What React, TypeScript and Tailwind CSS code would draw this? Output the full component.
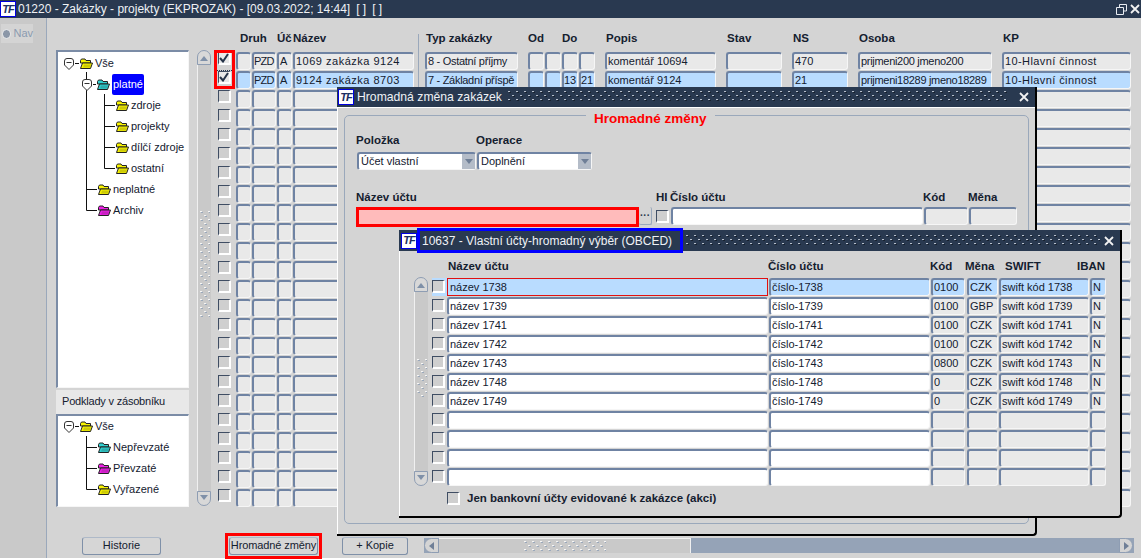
import React from 'react';

const FIELD_TEXT = 'h-[18px] px-[1px] text-[11px] leading-[14px] whitespace-nowrap overflow-hidden text-[#14202f]';
const FIELD_BORDER =
  'border-t-2 border-l-2 border-t-[#6f83a3] border-l-[#6f83a3] border-r border-b border-r-[#f6f6f6] border-b-[#f6f6f6] rounded-[3px]';
const FIELD = `${FIELD_BORDER} ${FIELD_TEXT}`;

const COLS = [
  'ml-0 w-[15px]',
  'ml-[1px] w-[24px] px-0! tracking-[-0.8px]',
  'ml-[1px] w-[15px]',
  'ml-[1px] w-[121px] tracking-[0.5px]',
  'ml-[11px] w-[93px] tracking-[-0.3px]',
  'ml-[10px] w-[16px] px-0!',
  'ml-[1px] w-[16px] px-0!',
  'ml-[1px] w-[16px] px-0!',
  'ml-[1px] w-[16px] px-0!',
  'ml-[10px] w-[111px]',
  'ml-[10px] w-[56px]',
  'ml-[10px] w-[56px]',
  'ml-[10px] w-[134px] tracking-[-0.3px]',
  'ml-[10px] w-[129px] tracking-[0.4px]',
];

const HEAD = ['Druh', '', 'Úč', 'Název', 'Typ zakázky', 'Od', '', 'Do', '', 'Popis', 'Stav', 'NS', 'Osoba', 'KP'];

const ROWS: string[][] = [
  ['', 'PZD', 'A', '1069 zakázka 9124', '8 - Ostatní příjmy', '', '', '', '', 'komentář 10694', '', '470', 'prijmeni200 jmeno200', '10-Hlavní činnost'],
  ['', 'PZD', 'A', '9124 zakázka 8703', '7 - Základní příspě', '', '', '13', '21', 'komentář 9124', '', '21', 'prijmeni18289 jmeno18289', '10-Hlavní činnost'],
];

const ACCOUNT_COLS = ['w-[321px]', 'ml-[1px] w-[161px]', 'ml-[1px] w-[34px]', 'ml-[2px] w-[31px]', 'ml-[1px] w-[90px]', 'ml-[1px] w-[16px]'];

const ACCOUNTS: string[][] = [
  ['název 1738', 'číslo-1738', '0100', 'CZK', 'swift kód 1738', 'N'],
  ['název 1739', 'číslo-1739', '0100', 'GBP', 'swift kód 1739', 'N'],
  ['název 1741', 'číslo-1741', '0100', 'CZK', 'swift kód 1741', 'N'],
  ['název 1742', 'číslo-1742', '0100', 'CZK', 'swift kód 1742', 'N'],
  ['název 1743', 'číslo-1743', '0800', 'CZK', 'swift kód 1743', 'N'],
  ['název 1748', 'číslo-1748', '0', 'CZK', 'swift kód 1748', 'N'],
  ['název 1749', 'číslo-1749', '0', 'CZK', 'swift kód 1749', 'N'],
];

const Logo = () => (
  <div className="w-[16px] h-[16px] shrink-0 bg-white border border-[#0000e0] flex items-center justify-center overflow-hidden">
    <span className="text-[11px] leading-none font-bold italic text-[#1c2f63] tracking-[-1px]">TF</span>
  </div>
);

const Dots = ({ id, w, h, fill = '#b8c0cc', shade, step = 8 }: { id: string; w: number; h: number; fill?: string; shade?: string; step?: number }) => (
  <svg width={w} height={h} className="shrink-0">
    <defs>
      <pattern id={id} width={step} height={step} patternUnits="userSpaceOnUse">
        {shade && <rect x="1" y="1" width="2" height="1" fill={shade} />}
        {shade && <rect x={step / 2 + 1} y={step / 2 + 1} width="2" height="1" fill={shade} />}
        <rect x="0" y="0" width="2" height="1" fill={fill} />
        <rect x={step / 2} y={step / 2} width="2" height="1" fill={fill} />
      </pattern>
    </defs>
    <rect width={w} height={h} fill={`url(#${id})`} />
  </svg>
);

const CloseIcon = () => (
  <svg width="10" height="10" viewBox="0 0 10 10" className="shrink-0">
    <path d="M1 1 L9 9 M9 1 L1 9" stroke="#f2f2f2" strokeWidth="1.8" />
  </svg>
);

const Folder = ({ color = '#f8f400' }: { color?: string }) => (
  <svg width="14" height="12" viewBox="0 0 14 12" className="shrink-0">
    <path d="M1.5 2.5 L2.5 1 H6 L7 2.5 H11.5 V5 H1.5 Z" fill={color} stroke="#222" strokeWidth="1" />
    <path d="M1.5 10.5 L3.5 5 H13.5 L11.5 10.5 Z" fill={color} stroke="#222" strokeWidth="1" />
    <path d="M4 9.5 L5 6.5 H12 L11 9.5 Z" fill="#222" fillOpacity="0.2" />
  </svg>
);

const TreeRow = ({ indent, color, label, active }: { indent: string; color?: string; label: string; active?: boolean }) => (
  <div className={`h-[21px] flex items-center gap-[2px] ${indent}`}>
    <Folder color={color} />
    {active ? (
      <span className="bg-[#0000ff] text-white rounded-[2px] h-[21px] leading-[21px] px-[1px] text-[11px]">{label}</span>
    ) : (
      <span className="text-[11px] text-[#14202f] whitespace-nowrap">{label}</span>
    )}
  </div>
);

const Shield = ({ x, y }: { x: number; y: number }) => (
  <g transform={`translate(${x} ${y})`}>
    <path d="M0.5 3 Q0.5 0.5 3 0.5 H7 Q9.5 0.5 9.5 3 V7 L5 11.5 L0.5 7 Z" fill="#fff" stroke="#333" />
    <path d="M2.5 4.5 H7.5" stroke="#333" />
  </g>
);

const TREE_PANEL =
  'relative bg-white border-t-2 border-l-2 border-t-[#7b8ca6] border-l-[#7b8ca6] border-r border-b border-r-[#f6f6f6] border-b-[#f6f6f6]';

const Checkbox = ({ checked }: { checked?: boolean }) => (
  <div
    className={`w-[13px] h-[13px] shrink-0 border-t border-l border-t-[#3f4d63] border-l-[#3f4d63] border-r-2 border-b-2 border-r-white border-b-white flex items-center justify-center ${
      checked ? 'bg-[#e9e9e9]' : 'bg-[#cfcfcf]'
    }`}
  >
    {checked && (
      <svg width="10" height="10" viewBox="0 0 10 10">
        <path d="M1 5 L4 8.5 L9 1" fill="none" stroke="#26344a" strokeWidth="2" />
      </svg>
    )}
  </div>
);

const VScroll = ({ className, trackClass, dots, id }: { className: string; trackClass: string; dots: number; id: string }) => (
  <div className={`flex flex-col w-[14px] shrink-0 ${className}`}>
    <div className="h-[15px] shrink-0 rounded-t-full border border-[#8e9db3] bg-[#d8d8d8] flex items-center justify-center pt-[2px]">
      <svg width="8" height="5"><path d="M4 0 L8 5 H0 Z" fill="#7f90a8" /></svg>
    </div>
    <div className={`flex-1 bg-[#c9c9c9] border-l border-l-[#f0f0f0] flex items-center justify-center ${trackClass}`}>
      <Dots id={id} w={10} h={dots} fill="#f6f6f6" shade="#9aa8bb" />
    </div>
    <div className="h-[15px] shrink-0 rounded-b-full border border-[#8e9db3] bg-[#d8d8d8] flex items-center justify-center pb-[2px]">
      <svg width="8" height="5"><path d="M0 0 H8 L4 5 Z" fill="#7f90a8" /></svg>
    </div>
  </div>
);

const BUTTON =
  'h-[18px] border border-[#7f90a8] border-t-[#aeb9c8] rounded-[3px] bg-[#d6d6d6] text-[11px] leading-[15px] text-[#14202f] text-center';

const LABEL = 'text-[11.5px] font-bold leading-[14px] whitespace-nowrap';

export default function App() {
  return (
    <div className="relative w-[1141px] h-[559px] overflow-hidden bg-[#d4d4d4] font-['Liberation_Sans',Arial,sans-serif] text-[#14202f]">
      {/* main title */}
      <div className="h-[18px] bg-[#293950] flex items-center text-[#eef1f5] text-[12px] pr-[1px]">
        <Logo />
        <span className="ml-[2px] whitespace-nowrap">01220 - Zakázky - projekty (EKPROZAK) - [09.03.2022; 14:44]</span>
        <span className="ml-[6px]">[ ]</span>
        <span className="ml-[6px]">[ ]</span>
        <div className="ml-auto flex items-center gap-[3px]">
          <svg width="11" height="11" viewBox="0 0 11 11">
            <path d="M3.5 3 V0.5 H10.5 V7 H7.5 M0.5 3.5 H7.5 V10.5 H0.5 Z" fill="none" stroke="#e8ecf2" />
          </svg>
          <CloseIcon />
        </div>
      </div>

      <div className="flex h-[541px] border-b border-b-white">
        {/* nav strip */}
        <div className="w-[47px] shrink-0 bg-[#c9c9c9] border-r border-r-[#9aa8bb] pt-[6px] pl-[1px]">
          <div className="w-[32px] h-[19px] bg-[#d4d4d4] flex items-center gap-[2px] pl-[1px]">
            <div className="w-[10px] h-[10px] rounded-full bg-[#8b97a8] border border-[#f0f0f0]" />
            <span className="text-[11px] text-[#8b9bb0]">Nav</span>
          </div>
        </div>

        <div className="flex-1 flex flex-col">
          <div className="flex h-[490px] shrink-0">
            {/* trees */}
            <div className="w-[142px] shrink-0 pl-[9px] pt-[32px] flex flex-col">
              <div className={`${TREE_PANEL} h-[338px] pt-[1px]`}>
                <svg className="absolute left-0 top-0 pointer-events-none" width="130" height="170">
                  <path d="M17 11.5 H21 M28.5 20 V158.5 M28.5 137.5 H39 M28.5 158.5 H39 M46.5 42 V116.5 M46.5 53.5 H57 M46.5 74.5 H57 M46.5 95.5 H57 M46.5 116.5 H57 M35 32.5 H38" stroke="#111" fill="none" />
                  <Shield x={6} y={6} />
                  <Shield x={24} y={27} />
                </svg>
                <div className="relative">
                  <TreeRow indent="pl-[21px]" label="Vše" />
                  <TreeRow indent="pl-[38px]" color="#30d0d0" label="platné" active />
                  <TreeRow indent="pl-[57px]" label="zdroje" />
                  <TreeRow indent="pl-[57px]" label="projekty" />
                  <TreeRow indent="pl-[57px]" label="dílčí zdroje" />
                  <TreeRow indent="pl-[57px]" label="ostatní" />
                  <TreeRow indent="pl-[39px]" label="neplatné" />
                  <TreeRow indent="pl-[39px]" color="#f020e8" label="Archiv" />
                </div>
              </div>
              <div className="h-[24px] mt-[2px] bg-[#e8e8e8] pl-[6px] text-[11px] tracking-[-0.2px] leading-[22px] whitespace-nowrap">Podklady v zásobníku</div>
              <div className={`${TREE_PANEL} h-[93px]`}>
                <svg className="absolute left-0 top-0 pointer-events-none" width="130" height="90">
                  <path d="M17 10.5 H21 M28.5 20 V73.5 M28.5 31.5 H39 M28.5 52.5 H39 M28.5 73.5 H39" stroke="#111" fill="none" />
                  <Shield x={6} y={5} />
                </svg>
                <div className="relative">
                  <TreeRow indent="pl-[21px]" label="Vše" />
                  <TreeRow indent="pl-[39px]" color="#30d0d0" label="Nepřevzaté" />
                  <TreeRow indent="pl-[39px]" color="#f020e8" label="Převzaté" />
                  <TreeRow indent="pl-[39px]" label="Vyřazené" />
                </div>
              </div>
            </div>

            {/* grid */}
            <div className="flex-1 flex flex-col">
              <div className="h-[32px] shrink-0 flex items-start pl-[47px] pt-[12px] text-[11.5px] font-bold">
                {HEAD.map((h, i) => (
                  <div key={i} className={`${COLS[i]} shrink-0 whitespace-nowrap tracking-normal ${i === 0 ? 'pl-[4px]' : ''} ${i > 3 ? 'pl-[1px]' : ''}`}>
                    {h}
                  </div>
                ))}
              </div>
              <div className="flex pl-[8px]">
                <VScroll className="h-[456px]" trackClass="pb-[26px]" dots={108} id="main-dots" />
                <div className="ml-[7px] pt-[2px]">
                  {Array.from({ length: 24 }).map((_, r) => {
                    const data = ROWS[r];
                    return (
                      <div key={r} className="flex h-[19px] items-start">
                        <div className="w-[18px] shrink-0">
                          <Checkbox checked={r < 2} />
                        </div>
                        {COLS.map((c, i) => (
                          <div key={i} className={`${FIELD} ${c} shrink-0 ${r === 1 ? 'bg-[#b9dcff]' : 'bg-[#e9e9e9]'}`}>
                            {data ? data[i] : ''}
                          </div>
                        ))}
                      </div>
                    );
                  })}
                </div>
              </div>
            </div>
          </div>

          {/* bottom buttons */}
          <div className="flex items-start h-[26px] mt-[25px]">
            <div className={`${BUTTON} ml-[35px] w-[79px] mt-[4px]`}>Historie</div>
            <div className="ml-[64px] w-[97px] h-[26px] border-[3px] border-[#ff0000] px-[1px] pt-[1px]">
              <div className={`${BUTTON} whitespace-nowrap tracking-[-0.1px]`}>Hromadné změny</div>
            </div>
            <div className={`${BUTTON} ml-[20px] w-[66px] mt-[4px]`}>+ Kopie</div>
            <div className="ml-[16px] mt-[5px] w-[710px] h-[15px] bg-[#95a3b7] flex">
              <div className="w-[15px] rounded-l-full bg-[#d4d4d4] border border-[#8e9db3] flex items-center justify-center">
                <svg width="5" height="8"><path d="M5 0 V8 L0 4 Z" fill="#6f7f97" /></svg>
              </div>
              <div className="w-[252px] bg-[#c9c9c9] border-t border-t-[#f0f0f0] border-r border-r-[#f0f0f0] flex items-center justify-center">
                <Dots id="h-dots" w={82} h={10} fill="#f6f6f6" shade="#9aa8bb" />
              </div>
              <div className="ml-auto mr-[1px] w-[14px] rounded-r-full bg-[#d4d4d4] border border-[#8e9db3] flex items-center justify-center">
                <svg width="5" height="8"><path d="M0 0 V8 L5 4 Z" fill="#6f7f97" /></svg>
              </div>
            </div>
          </div>
        </div>
      </div>

      {/* separator between Název and Typ zakázky */}
      <div className="absolute left-[418px] top-[34px] w-[1px] h-[54px] bg-[#9aa8bb]" />

      {/* red box over the two checked rows */}
      <div className="absolute left-[214px] top-[50px] w-[21px] h-[39px] border-[3px] border-[#ff0000]">
        <div className="mt-[17px] border-t border-dotted border-t-[#26344a]" />
      </div>

      {/* window: Hromadná změna zakázek */}
      <div className="absolute left-[337px] top-[87px] w-[700px] h-[449px] bg-[#d4d4d4] border-r-2 border-b-2 border-black rounded-br-[4px] flex flex-col">
        <div className="h-[20px] bg-[#293950] flex items-center text-[#eef1f5] text-[12.2px] pl-[1px] pr-[6px] shrink-0">
          <Logo />
          <span className="ml-[3px] whitespace-nowrap">Hromadná změna zakázek</span>
          <div className="ml-[6px] flex-1">
            <Dots id="w1-dots" w={500} h={12} shade="#18222f" />
          </div>
          <CloseIcon />
        </div>
        <div className="flex-1 border-t border-t-white border-l border-l-white pl-[6px] pt-[7px]">
          <div className="relative w-[685px] h-[409px] border border-[#9aa8bb] rounded-[5px] pl-[11px] pt-[17px]">
            <div className="absolute left-[241px] top-[-5px] bg-[#d4d4d4] px-[8px] text-[13.5px] leading-[16px] font-bold text-[#ff0000] whitespace-nowrap">
              Hromadné změny
            </div>
            <div className={`flex ${LABEL}`}>
              <div className="w-[120px]">Položka</div>
              <div>Operace</div>
            </div>
            <div className="flex mt-[5px] pl-[1px]">
              <div className={`w-[119px] h-[18px] bg-white ${FIELD_BORDER} flex text-[11px] leading-[14px]`}>
                <span className="pl-[2px] flex-1">Účet vlastní</span>
                <div className="w-[13px] bg-[#b4bcc8] flex items-center justify-center">
                  <svg width="8" height="5"><path d="M0 0 H8 L4 5 Z" fill="#6f7f97" /></svg>
                </div>
              </div>
              <div className={`ml-[1px] w-[115px] h-[18px] bg-white ${FIELD_BORDER} flex text-[11px] leading-[14px]`}>
                <span className="pl-[2px] flex-1">Doplnění</span>
                <div className="w-[13px] bg-[#b4bcc8] flex items-center justify-center">
                  <svg width="8" height="5"><path d="M0 0 H8 L4 5 Z" fill="#6f7f97" /></svg>
                </div>
              </div>
            </div>
            <div className={`flex mt-[20px] ${LABEL}`}>
              <div className="w-[300px]">Název účtu</div>
              <div className="w-[14px]">HI</div>
              <div className="w-[253px]">Číslo účtu</div>
              <div className="w-[45px]">Kód</div>
              <div>Měna</div>
            </div>
            <div className="flex mt-[3px] items-start">
              <div className="w-[283px] h-[20px] bg-[#ffbbbb] border-[3px] border-[#ff0000]" />
              <div className="w-[13px] h-[18px] border-r border-b border-[#9aa8bb] rounded-[2px] flex items-center justify-center">
                <span className="text-[10px] leading-none font-bold text-[#26344a]">···</span>
              </div>
              <div className="ml-[4px] mt-[3px]">
                <Checkbox />
              </div>
              <div className={`${FIELD} ml-[2px] w-[252px] bg-white`} />
              <div className={`${FIELD} ml-[1px] w-[44px] bg-[#e9e9e9]`} />
              <div className={`${FIELD} ml-[1px] w-[48px] bg-[#e9e9e9]`} />
            </div>
          </div>
        </div>
      </div>

      {/* window: Vlastní účty */}
      <div className="absolute left-[399px] top-[230px] w-[723px] h-[288px] bg-[#d4d4d4] border-r-2 border-b-2 border-black rounded-br-[4px] flex flex-col">
        <div className="relative h-[21px] bg-[#293950] flex items-center text-[#eef1f5] text-[12px] pl-[2px] pr-[6px] shrink-0">
          <Logo />
          <span className="ml-[5px] whitespace-nowrap">10637 - Vlastní účty-hromadný výběr (OBCED)</span>
          <div className="ml-[14px] flex-1">
            <Dots id="w2-dots" w={414} h={12} shade="#18222f" />
          </div>
          <CloseIcon />
          <div className="absolute left-[18px] top-[-2px] w-[266px] h-[25px] border-[3px] border-[#0000ff]" />
        </div>
        <div className="flex-1 border-l border-l-white pl-[14px]">
          <div className={`flex h-[26px] pt-[8px] ${LABEL}`}>
            <div className="w-[33px]" />
            <div className="w-[321px] pl-[1px]">Název účtu</div>
            <div className="w-[162px]">Číslo účtu</div>
            <div className="w-[35px]">Kód</div>
            <div className="w-[40px]">Měna</div>
            <div className="w-[72px]">SWIFT</div>
            <div>IBAN</div>
          </div>
          <div className="flex">
            <VScroll className="h-[209px]" trackClass="pb-[6px]" dots={40} id="acc-dots" />
            <div className="ml-[4px] pt-[1px]">
              {Array.from({ length: 11 }).map((_, r) => {
                const data = ACCOUNTS[r];
                return (
                  <div key={r} className="flex h-[19px] items-start">
                    <div className={`w-[15px] h-[18px] shrink-0 pt-[2px] ${r === 0 ? 'bg-[#b9dcff]' : ''}`}>
                      <Checkbox />
                    </div>
                    {ACCOUNT_COLS.map((c, i) => {
                      const bg = r === 0 ? 'bg-[#b9dcff]' : i < 2 ? 'bg-white' : 'bg-[#e9e9e9]';
                      const frame = r === 0 && i === 0 ? 'border border-[#e01010] pt-[1px] pl-[2px]' : FIELD_BORDER;
                      return (
                        <div key={i} className={`${frame} ${FIELD_TEXT} ${c} ${bg} shrink-0`}>
                          {data ? data[i] : ''}
                        </div>
                      );
                    })}
                  </div>
                );
              })}
            </div>
          </div>
          <div className="flex items-center mt-[4px] ml-[33px] gap-[7px]">
            <Checkbox />
            <span className={LABEL}>Jen bankovní účty evidované k zakázce (akci)</span>
          </div>
        </div>
      </div>
    </div>
  );
}
